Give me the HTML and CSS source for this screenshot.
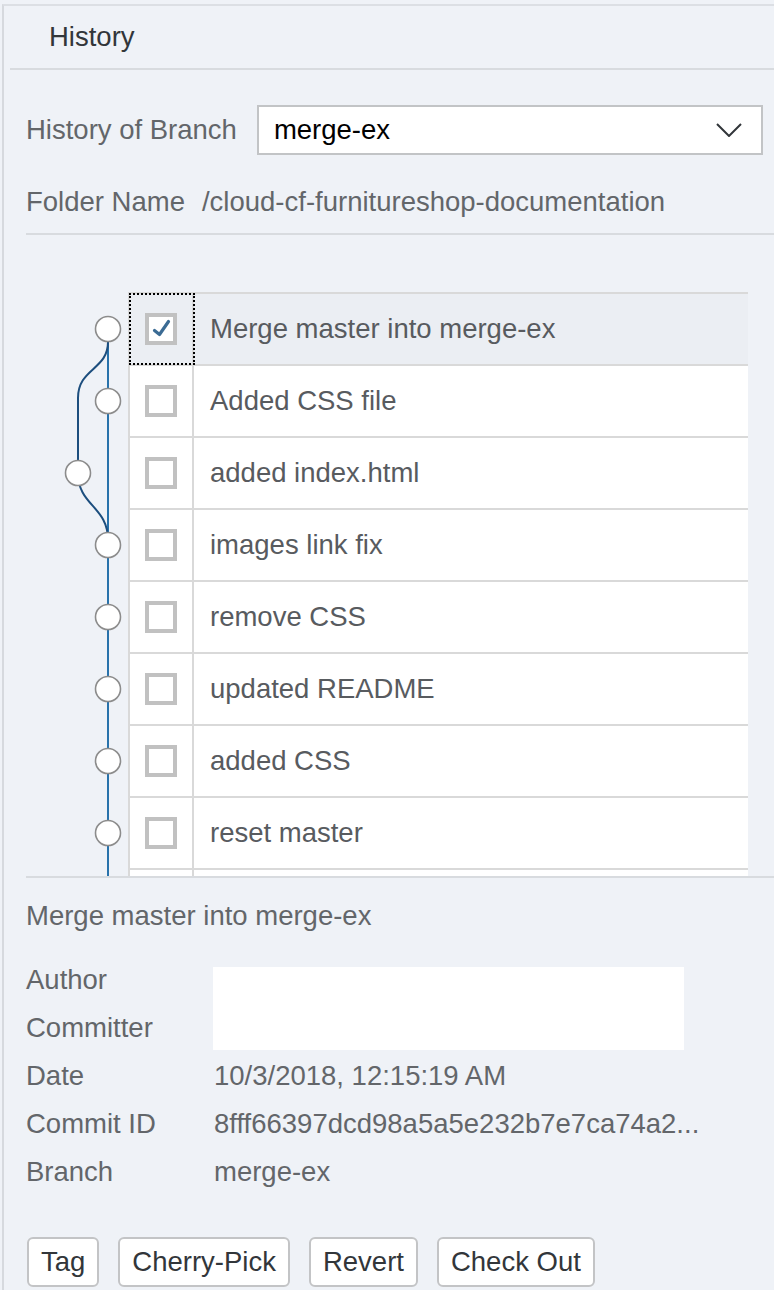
FILE: index.html
```html
<!DOCTYPE html>
<html>
<head>
<meta charset="utf-8">
<link rel="stylesheet" href="styles.css">
</head>
<body>
<div class="panel">
  <div class="header"><span class="header-title">History</span></div>

  <div class="form">
    <div class="branch-row">
      <span class="label">History of Branch</span>
      <div class="select">
        <span class="select-text">merge-ex</span>
        <svg class="chev" width="26" height="14" viewBox="0 0 26 14"><path d="M1 1 L13 13 L25 1" fill="none" stroke="#32363a" stroke-width="2"/></svg>
      </div>
    </div>
    <div class="folder-row">
      <span class="label">Folder Name</span>
      <span class="label">/cloud-cf-furnitureshop-documentation</span>
    </div>
  </div>

  <div class="history">
    <svg class="graph" width="102" height="640" viewBox="0 0 102 640">
      <g fill="none" stroke-width="2">
        <path d="M82 37 L82 640" stroke="#2872ab"/>
        <path d="M82 50 C82 78, 52 76, 52 106 L52 181" stroke="#1c4e7e"/>
        <path d="M52 181 C52 214, 82 214, 82 248" stroke="#1c4e7e"/>
      </g>
      <g fill="#ffffff" stroke="#8c8c8c" stroke-width="1.6">
        <circle cx="82" cy="37" r="12.5"/>
        <circle cx="82" cy="109" r="12.5"/>
        <circle cx="52" cy="181" r="12.5"/>
        <circle cx="82" cy="253" r="12.5"/>
        <circle cx="82" cy="325" r="12.5"/>
        <circle cx="82" cy="397" r="12.5"/>
        <circle cx="82" cy="469" r="12.5"/>
        <circle cx="82" cy="541" r="12.5"/>
      </g>
    </svg>
    <div class="commits">
      <div class="commit selected">
        <div class="cb-cell focused"><span class="cb"><svg width="24" height="24" viewBox="0 0 24 24"><path d="M5.5 13.5 L10.5 17.5 L19.5 4.5" fill="none" stroke="#3b6b94" stroke-width="3.2" stroke-linecap="round" stroke-linejoin="round"/></svg></span></div>
        <div class="msg">Merge master into merge-ex</div>
      </div>
      <div class="commit"><div class="cb-cell"><span class="cb"></span></div><div class="msg">Added CSS file</div></div>
      <div class="commit"><div class="cb-cell"><span class="cb"></span></div><div class="msg">added index.html</div></div>
      <div class="commit"><div class="cb-cell"><span class="cb"></span></div><div class="msg">images link fix</div></div>
      <div class="commit"><div class="cb-cell"><span class="cb"></span></div><div class="msg">remove CSS</div></div>
      <div class="commit"><div class="cb-cell"><span class="cb"></span></div><div class="msg">updated README</div></div>
      <div class="commit"><div class="cb-cell"><span class="cb"></span></div><div class="msg">added CSS</div></div>
      <div class="commit"><div class="cb-cell"><span class="cb"></span></div><div class="msg">reset master</div></div>
      <div class="commit"><div class="cb-cell"><span class="cb"></span></div><div class="msg"></div></div>
    </div>
  </div>

  <div class="details">
    <div class="details-title">Merge master into merge-ex</div>
    <div class="props">
      <span class="label">Author</span>
      <div class="blank"></div>
      <span class="label">Committer</span>
      <span class="label">Date</span>
      <span class="label">10/3/2018, 12:15:19 AM</span>
      <span class="label">Commit ID</span>
      <span class="label">8fff66397dcd98a5a5e232b7e7ca74a2...</span>
      <span class="label">Branch</span>
      <span class="label">merge-ex</span>
    </div>
  </div>

  <div class="actions">
    <button class="btn">Tag</button>
    <button class="btn">Cherry-Pick</button>
    <button class="btn">Revert</button>
    <button class="btn">Check Out</button>
  </div>
</div>
</body>
</html>
```

FILE: styles.css
```css
html, body {
  margin: 0;
  padding: 0;
  background: #eff2f7;
}
body {
  font-family: "Liberation Sans", Arial, sans-serif;
  font-size: 27.5px;
  color: #63666a;
  overflow: hidden;
}
.panel {
  margin: 4px 0 0 2px;
  border-top: 2px solid #dcdfe4;
  border-left: 2px solid #d6d9de;
  height: 1290px;
}
.header {
  margin-left: 6px;
  height: 62px;
  border-bottom: 2px solid #d8dbdf;
  display: flex;
  align-items: center;
  padding-left: 39px;
}
.header-title {
  color: #32363a;
}
.form {
  margin-left: 22px;
  padding: 35px 11px 7px 0;
  border-bottom: 2px solid #d8dbdf;
}
.branch-row {
  display: flex;
  align-items: center;
  gap: 20px;
  height: 50px;
}
.select {
  flex: 1;
  height: 46px;
  background: #ffffff;
  border: 2px solid #c2c4c6;
  display: flex;
  align-items: center;
  justify-content: space-between;
  padding: 0 19px 0 15px;
}
.select-text {
  color: #000000;
}
.chev {
  display: block;
}
.folder-row {
  margin-top: 23px;
  line-height: 48px;
  display: flex;
  gap: 17px;
}
.history {
  margin-left: 22px;
  height: 584px;
  padding-top: 57px;
  border-bottom: 2px solid #d8dbdf;
  overflow: hidden;
  display: flex;
  align-items: flex-start;
}
.graph {
  display: block;
  flex: none;
}
.commits {
  width: 618px;
  border-left: 2px solid #d9d9d9;
}
.commit {
  display: flex;
  height: 70px;
  border-top: 2px solid #d9d9d9;
  background: #ffffff;
}
.commit.selected {
  background: #ebeef3;
}
.cb-cell {
  width: 62px;
  border-right: 2px solid #d9d9d9;
  display: flex;
  align-items: center;
  justify-content: center;
}
.cb-cell.focused {
  outline: 2px dotted #000000;
  outline-offset: -1px;
}
.cb {
  width: 24px;
  height: 24px;
  border: 4px solid #c1c1c1;
  background: #ffffff;
  display: block;
}
.cb svg {
  display: block;
}
.msg {
  flex: 1;
  padding-left: 16px;
  display: flex;
  align-items: center;
  color: #585b5f;
}
.details {
  padding-left: 22px;
}
.details-title {
  margin-top: 14px;
  line-height: 48px;
}
.props {
  margin-top: 16px;
  display: grid;
  grid-template-columns: 188px auto;
  grid-auto-rows: 48px;
  align-items: center;
}
.blank {
  grid-column: 2;
  grid-row: 1 / span 2;
  align-self: stretch;
  width: 471px;
  margin: 11px 0 2px -1px;
  background: #ffffff;
}
.actions {
  margin-top: 41px;
  padding-left: 23px;
  display: flex;
  gap: 19px;
}
.btn {
  height: 50px;
  padding: 0 12px;
  background: #ffffff;
  border: 2px solid #c3c4c6;
  border-radius: 6px;
  font-family: "Liberation Sans", Arial, sans-serif;
  font-size: 27.5px;
  color: #32363a;
}
```
